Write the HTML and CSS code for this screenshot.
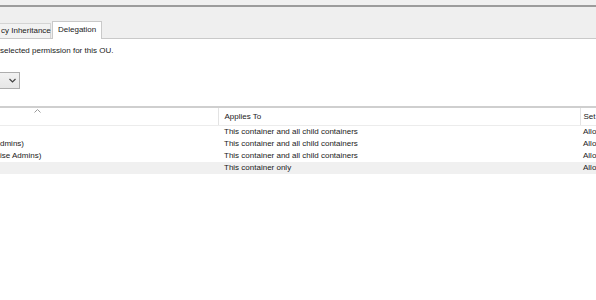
FILE: index.html
```html
<!DOCTYPE html>
<html lang="en">

<head>
  <meta charset="UTF-8">
  <title>Delegation</title>
  <link rel="stylesheet" href="styles.css">
</head>

<body>
  <div class="topbar"></div>
  <ul class="tab-header">
    <li>cy Inheritance</li>
    <li class="tab-header-active">Delegation</li>
  </ul>
  <div class="tab-content">
    <p class="desc">selected permission for this OU.</p>
    <div class="combo">
      <svg width="7" height="5" viewBox="0 0 7 5"><path d="M0.5 1 L3.5 4 L6.5 1" fill="none" stroke="#444" stroke-width="1.2"/></svg>
    </div>
    <table class="grid">
      <thead>
        <tr>
          <th class="col-name"><svg class="sort" width="7" height="4" viewBox="0 0 7 4"><path d="M0.5 3.5 L3.5 0.5 L6.5 3.5" fill="none" stroke="#9a9a9a" stroke-width="1"/></svg></th>
          <th class="col-applies">Applies To</th>
          <th class="col-set">Set</th>
        </tr>
      </thead>
      <tbody>
        <tr>
          <td></td>
          <td>This container and all child containers</td>
          <td class="set">Allo</td>
        </tr>
        <tr>
          <td class="clip">dmins)</td>
          <td>This container and all child containers</td>
          <td class="set">Allo</td>
        </tr>
        <tr>
          <td class="clip">ise Admins)</td>
          <td>This container and all child containers</td>
          <td class="set">Allo</td>
        </tr>
        <tr class="row-selected">
          <td></td>
          <td>This container only</td>
          <td class="set">Allo</td>
        </tr>
      </tbody>
    </table>
  </div>
</body>

</html>
```

FILE: styles.css
```css
* {
  margin: 0;
  padding: 0;
  box-sizing: border-box;
}

html,
body {
  width: 596px;
  height: 300px;
  overflow: hidden;
  background: #fff;
}

body {
  font-family: "Liberation Sans", Arial, sans-serif;
  font-size: 8px;
  color: #1a1a1a;
}

ul {
  list-style-type: none;
}

.topbar {
  height: 7px;
  background: #f0f0f0;
  border-bottom: 2px solid #9c9c9c;
}

.tab-header {
  display: flex;
  align-items: flex-end;
  height: 32px;
  background: #efefef;
  border-bottom: 1px solid #c9c9c9;
}

.tab-header li {
  width: 51px;
  height: 15px;
  line-height: 14px;
  padding-left: 1px;
  border: 1px solid #d4d4d4;
  border-left: none;
  border-bottom: none;
  background: #f2f2f2;
  white-space: nowrap;
}

.tab-header .tab-header-active {
  width: 50px;
  height: 18px;
  line-height: 15px;
  padding-left: 5px;
  background: #fff;
  border: 1px solid #c9c9c9;
  border-bottom: none;
  margin-left: 1px;
  margin-bottom: -1px;
  position: relative;
}

.desc {
  padding-top: 7px;
  line-height: 10px;
}

.combo {
  width: 20px;
  height: 17px;
  margin-top: 16px;
  border: 1px solid #adadad;
  border-left: none;
  background: linear-gradient(#f2f2f2, #e6e6e6);
  display: flex;
  align-items: center;
  justify-content: flex-end;
  padding-right: 3px;
}

.grid {
  width: 100%;
  margin-top: 17px;
  border-collapse: collapse;
  table-layout: fixed;
  border-top: 2px solid #cfcfcf;
}

.grid th {
  height: 18px;
  font-weight: normal;
  text-align: left;
  padding-left: 6px;
  border-bottom: 1px solid #ececec;
  border-left: 1px solid #e3e3e3;
  white-space: nowrap;
  overflow: hidden;
  vertical-align: middle;
}

.grid th.col-name {
  width: 218px;
  border-left: none;
  vertical-align: top;
  padding-left: 34px;
}

.grid th.col-applies {
  width: 362px;
}

.grid th.col-set {
  padding-left: 3px;
}

.sort {
  display: block;
  margin-top: 1px;
}

.grid td {
  height: 12px;
  line-height: 12px;
  padding-left: 6px;
  white-space: nowrap;
  overflow: hidden;
}

.grid td.clip {
  padding-left: 0;
}

.grid td.set {
  padding-left: 3px;
}

.row-selected td {
  background: #f0f0f0;
}
```
